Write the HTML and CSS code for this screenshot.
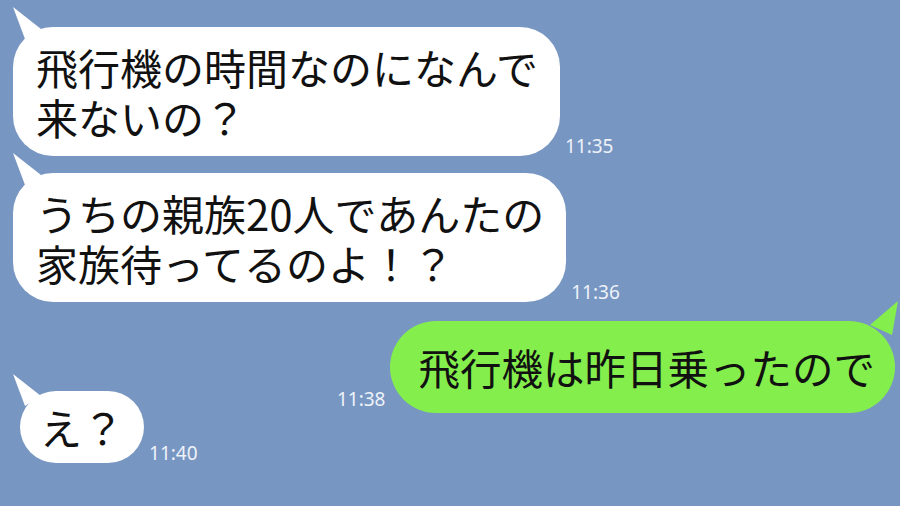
FILE: index.html
```html
<!DOCTYPE html>
<html lang="ja">
<head>
<meta charset="UTF-8">
<meta name="viewport" content="width=device-width, initial-scale=1.0">
<title>トーク</title>
<link rel="stylesheet" href="styles.css">
</head>
<body>

<div class="chat">
    <div class="row row-left">
        <div class="bubble bubble-white">飛行機の時間なのになんで<br>来ないの？</div>
        <span class="time">11:35</span>
    </div>

    <div class="row row-left">
        <div class="bubble bubble-white">うちの親族20人であんたの<br>家族待ってるのよ！？</div>
        <span class="time">11:36</span>
    </div>

    <div class="row row-right">
        <span class="time">11:38</span>
        <div class="bubble bubble-green">飛行機は昨日乗ったので</div>
    </div>

    <div class="row row-left row-short">
        <div class="bubble bubble-white bubble-small">え？</div>
        <span class="time">11:40</span>
    </div>
</div>

</body>
</html>
```

FILE: styles.css
```css
body {
    margin: 0;
    background: #7896c2;
    font-family: "Noto Sans CJK JP", "Noto Sans", sans-serif;
    height: 506px;
    overflow: hidden;
}
.chat {
    display: flex;
    flex-direction: column;
    gap: 17px;
    padding: 27px 5px 0 13px;
}
.row {
    display: flex;
    align-items: flex-end;
}
.row-right {
    justify-content: flex-end;
    margin-top: 2px;
}
.row-short {
    margin-top: -39px;
    padding-left: 7px;
}
.bubble {
    position: relative;
    font-size: 42px;
    line-height: 50px;
    color: #111;
    padding: 15px 22px 14px 23px;
    border-radius: 40px;
}
.bubble::before {
    content: "";
    position: absolute;
    top: -20px;
    width: 30px;
    height: 32px;
}
.bubble-white {
    background: #fff;
}
.bubble-white::before {
    left: 0;
    background: #fff;
    clip-path: polygon(0 0, 28px 22px, 12px 32px);
}
.bubble-small {
    padding: 11px 20px;
    border-radius: 36px;
}
.bubble-small::before {
    left: -7px;
    top: -17px;
}
.bubble-green {
    background: #84ee4c;
    font-size: 41.5px;
    padding: 21px 20px 21px 28px;
    border-radius: 46px;
}
.bubble-green::before {
    right: -3px;
    top: -20px;
    background: #84ee4c;
    clip-path: polygon(30px 0, 2px 24px, 24px 34px);
    height: 34px;
}
.time {
    font-family: "Noto Sans", sans-serif;
    font-size: 19px;
    line-height: 19px;
    color: #eef2f9;
    margin: 0 5px;
}
.row-right .time {
    margin: 0 5px 4px 0;
}
```
